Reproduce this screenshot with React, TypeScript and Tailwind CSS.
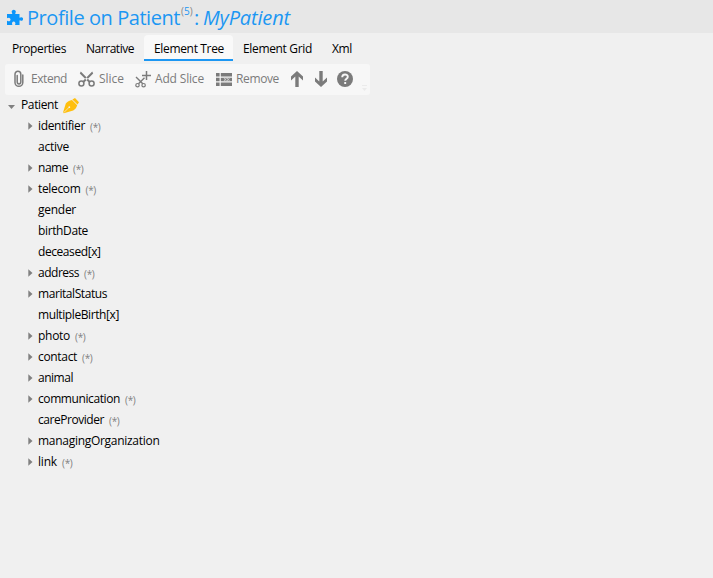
import React from 'react';

type Row = { name: string; w: string; branch?: boolean; many?: boolean };

const rows: Row[] = [
  { name: 'identifier', w: 'w-[47px]', branch: true, many: true },
  { name: 'active', w: 'w-[31px]' },
  { name: 'name', w: 'w-[30px]', branch: true, many: true },
  { name: 'telecom', w: 'w-[42.5px]', branch: true, many: true },
  { name: 'gender', w: 'w-[38px]' },
  { name: 'birthDate', w: 'w-[50px]' },
  { name: 'deceased[x]', w: 'w-[62.5px]' },
  { name: 'address', w: 'w-[41px]', branch: true, many: true },
  { name: 'maritalStatus', w: 'w-[69px]', branch: true },
  { name: 'multipleBirth[x]', w: 'w-[81px]' },
  { name: 'photo', w: 'w-[32px]', branch: true, many: true },
  { name: 'contact', w: 'w-[39px]', branch: true, many: true },
  { name: 'animal', w: 'w-[35px]', branch: true },
  { name: 'communication', w: 'w-[82px]', branch: true, many: true },
  { name: 'careProvider', w: 'w-[66px]', many: true },
  { name: 'managingOrganization', w: 'w-[121.5px]', branch: true },
  { name: 'link', w: 'w-[19px]', branch: true, many: true },
];

/** Single-line label whose letter spacing adapts to the width it is given. */
function Label({ text, className }: { text: string; className: string }) {
  const ref = React.useRef<HTMLSpanElement>(null);
  const [spacing, setSpacing] = React.useState(0);
  React.useLayoutEffect(() => {
    const el = ref.current;
    if (!el || !el.parentElement) return;
    const free = el.parentElement.getBoundingClientRect().width - el.getBoundingClientRect().width;
    setSpacing(free / text.length);
  }, [text]);
  return (
    <span className={`block shrink-0 whitespace-nowrap ${className}`}>
      <span ref={ref} className="inline-block" style={{ letterSpacing: spacing }}>{text}</span>
    </span>
  );
}

function Paperclip() {
  return (
    <svg className="h-[18px] w-3 shrink-0" viewBox="0 0 12 18" fill="none" stroke="#7b7b7b" strokeWidth="1.5" strokeLinecap="round">
      <path d="M9.8 5v7.4a3.9 3.9 0 0 1-7.8 0V4.2a2.9 2.9 0 0 1 5.8 0v7.9a1.8 1.8 0 0 1-3.6 0V5.5" />
    </svg>
  );
}

function Scissors() {
  return (
    <svg className="h-4 w-[17px] shrink-0" viewBox="0 0 17 16" fill="none" stroke="#7b7b7b" strokeWidth="1.5">
      <circle cx="3.4" cy="12.6" r="2.5" />
      <circle cx="13.6" cy="12.6" r="2.5" />
      <path d="m4.4 10.4 9.8-9.8L15.2 2.6l-9 8.8zM12.6 10.4 2.8.6 1.8 2.6l9 8.8z" fill="#7b7b7b" stroke="none" />
    </svg>
  );
}

function ScissorsPlus() {
  return (
    <svg className="h-[17px] w-4 shrink-0" viewBox="0 0 16 17" fill="none" stroke="#7b7b7b">
      <circle cx="2.5" cy="14.2" r="1.7" strokeWidth="1.2" />
      <circle cx="8.6" cy="14.2" r="1.7" strokeWidth="1.2" />
      <path d="M3.5 12.8 9.5 6.8M7.8 12.8 1 6" strokeWidth="1.4" />
      <path d="M11.5 0v9M7 4.5h9" strokeWidth="1.5" />
    </svg>
  );
}

function RemoveRows() {
  return (
    <svg className="h-[13px] w-4 shrink-0" viewBox="0 0 16 13" fill="#7b7b7b">
      <path d="M0 0h3.6v3.4H0zM4.8 0H16v3.4H4.8zM0 4.8h3.6v3.4H0zM4.8 4.8H16v3.4H4.8zM0 9.6h3.6V13H0zM4.8 9.6H16V13H4.8z" />
      <path d="m8 5 2.5 3M10.5 5 8 8M11 5l2.5 3M13.5 5 11 8" stroke="#d8d8d8" strokeWidth=".8" />
    </svg>
  );
}

function Arrow({ down }: { down?: boolean }) {
  return (
    <svg className={`h-4 w-3 shrink-0 ${down ? 'rotate-180' : ''}`} viewBox="0 0 12 16" fill="#7b7b7b">
      <path d="M6 0 12 5.5v4L7.7 5.5V16H4.3V5.5L0 9.5v-4z" />
    </svg>
  );
}

export default function App() {
  return (
    <div className="h-[578px] w-[713px] overflow-hidden bg-[#f0f0f0] font-['Open_Sans','Noto_Sans',sans-serif] text-[12px] text-black">
      <header className="flex h-[33px] items-center bg-[#e7e7e7] pl-[7px] text-[20px] leading-[34px] text-[#1c97f3]">
        <svg className="mr-1 h-4 w-4 shrink-0" viewBox="0 0 16 16" fill="#0d96fb">
          <path d="M0 5h4.6c.7 0 .8-.5.5-1.1A2 2 0 1 1 8.4 3.9c-.3.6-.1 1.1.5 1.1H12.5v3.2c0 .6.4.7.9.4a1.7 1.7 0 1 1 0 2.8c-.5-.3-.9-.1-.9.4V16H8.6c-.6 0-.7-.4-.4-.9a1.7 1.7 0 1 0-3 0c.3.5.1.9-.5.9H0v-3.6c0-.5.4-.7.9-.4a1.7 1.7 0 1 0 0-2.9C.4 9.3 0 9.1 0 8.6z" />
        </svg>
        <Label text="Profile on Patient" className="mt-[2px] w-[153px]" />
        <span className="ml-px flex w-3 self-start text-[10px] leading-[22px] text-[#888]">
          (<span className="text-[#1c97f3]">5</span>)
        </span>
        <Label text=":" className="ml-px mt-[2px] w-[9px]" />
        <Label text="MyPatient" className="mt-[2px] w-[87px] italic" />
      </header>

      <nav className="flex h-[31px] items-start pt-[2px] leading-[28px]">
        <Label text="Properties" className="ml-3 w-[54px]" />
        <Label text="Narrative" className="ml-5 w-[48px]" />
        <div className="ml-[10px] h-[26px] w-[89px] rounded-t-[4px] border-b-2 border-[#1c97f3] bg-[#f9f9f9] pl-[10px]">
          <Label text="Element Tree" className="w-[70px]" />
        </div>
        <Label text="Element Grid" className="ml-[10px] w-[69px]" />
        <Label text="Xml" className="ml-5 w-[20px]" />
      </nav>

      <div className="ml-[5px] flex h-[31px] w-[365px] items-center rounded-[3px] bg-[#f7f7f7] pb-px pl-2 leading-[30px] text-[#7b7b7b]">
        <Paperclip />
        <Label text="Extend" className="ml-[6px] w-[36px]" />
        <span className="ml-[11px]"><Scissors /></span>
        <Label text="Slice" className="ml-[4px] w-[25px]" />
        <span className="ml-[11px]"><ScissorsPlus /></span>
        <Label text="Add Slice" className="ml-1 w-[49px]" />
        <span className="ml-[12px]"><RemoveRows /></span>
        <Label text="Remove" className="ml-1 w-[43px]" />
        <span className="ml-3"><Arrow /></span>
        <span className="ml-3"><Arrow down /></span>
        <svg className="ml-[10px] h-4 w-4 shrink-0" viewBox="0 0 16 16">
          <circle cx="8" cy="8" r="8" fill="#7b7b7b" />
          <path d="M5.2 6.2C5.2 2.6 10.8 2.6 10.8 5.8 10.8 7.8 8.2 7.6 8.2 9.8M8.2 11v2" fill="none" stroke="#f7f7f7" strokeWidth="1.9" />
        </svg>
        <svg className="ml-[9px] mt-[18px] h-[6px] w-[5px] shrink-0" viewBox="0 0 5 6" fill="#ebebeb">
          <path d="M0 0h5v1H0zM0 3h5L2.5 6z" />
        </svg>
      </div>

      <main className="-mt-px leading-[21px]">
        <div className="flex h-[21px] items-center pl-2">
          <svg className="mt-[5px] h-1 w-[7px] shrink-0" viewBox="0 0 7 4" fill="#808080"><path d="M0 0h7L3.5 4z" /></svg>
          <Label text="Patient" className="ml-[6px] w-[37px]" />
          <svg className="ml-[5px] mt-[2px] h-4 w-4 shrink-0" viewBox="0 0 16 16" fill="#ffbf0d">
            <path d="M9.4 1.6 12 0l4 4.2-1.5 2.3zM9 2l5.2 5.2c-.8 2.4-2 4.3-4 5.2L.8 15.3 0 14.6 2.8 5.6C4.3 3.7 6.4 2.6 9 2z" />
            <path d="m.8 14.6 5-5" stroke="#f0f0f0" strokeWidth=".7" />
            <circle cx="6.3" cy="9.2" r=".9" fill="#f0f0f0" />
          </svg>
        </div>
        {rows.map((r) => (
          <div key={r.name} className="flex h-[21px] items-center pl-[28px]">
            <span className="flex w-[10px] items-center">
              {r.branch && <svg className="h-[8px] w-[5px]" viewBox="0 0 5 8" fill="#808080"><path d="m.3.3 4.2 3.7L.3 7.7z" /></svg>}
            </span>
            <Label text={r.name} className={r.w} />
            {r.many && <Label text="(*)" className="ml-[5px] mt-[4px] w-[10.5px] text-[10px] text-[#808080]" />}
          </div>
        ))}
      </main>
    </div>
  );
}
